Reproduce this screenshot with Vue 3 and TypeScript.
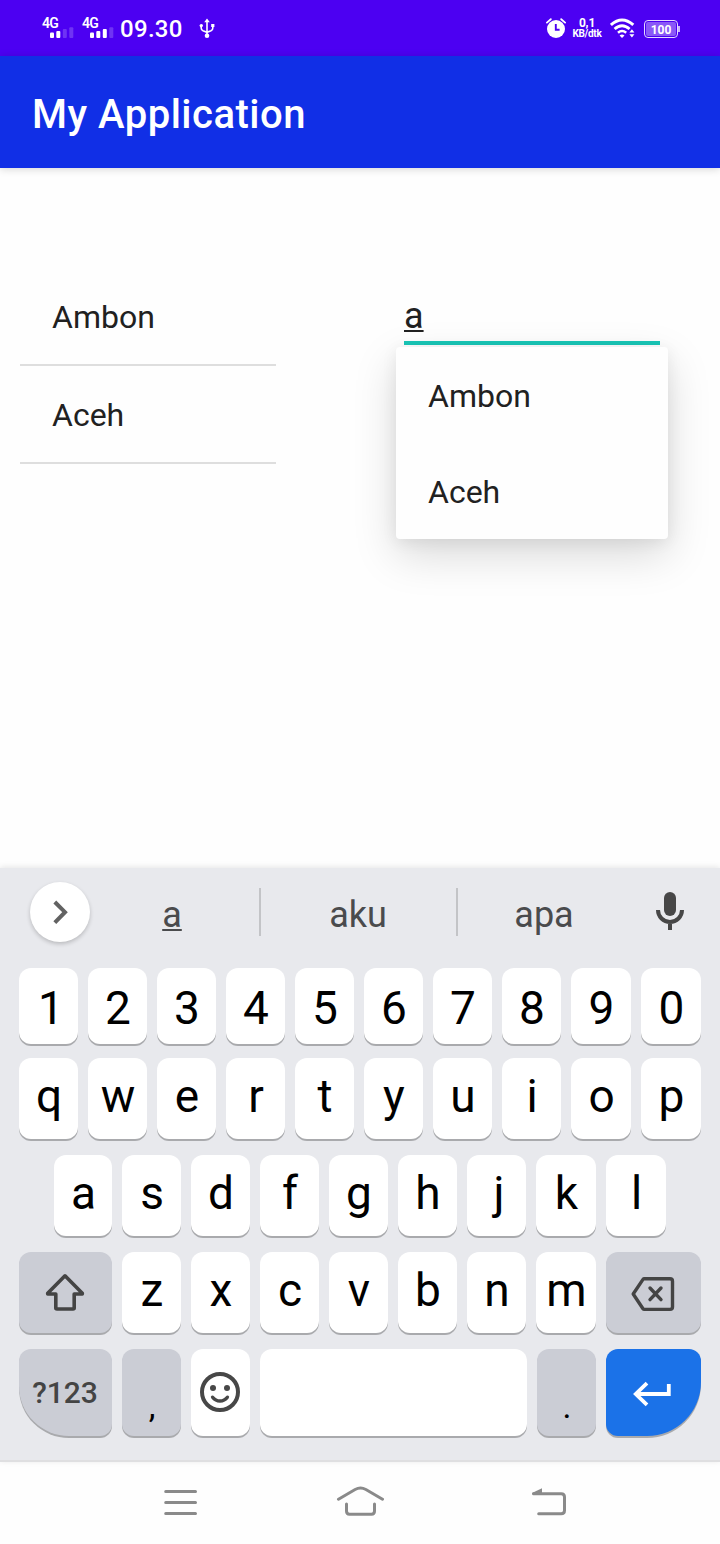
<script setup lang="ts">
import { ref } from 'vue'

interface Key {
  id: string
  kind?: 'fn' | 'enter' | 'space' | 'sym'
  icon?: 'shift' | 'delete' | 'emoji' | 'enter'
  label?: string
}

const letters = (text: string): Key[] => text.split('').map((c) => ({ id: c, label: c }))

const query = ref('a')
const cities = ['Ambon', 'Aceh']
const suggestions = ['a', 'aku', 'apa']
const signals = [2, 3]
const bars = [
  { x: 8, y: 5.4 },
  { x: 14.3, y: 4 },
  { x: 20.8, y: 2 },
  { x: 27.3, y: 0.3 },
]

const rows: { name: string; keys: Key[] }[] = [
  { name: 'digits', keys: letters('1234567890') },
  { name: 'top', keys: letters('qwertyuiop') },
  { name: 'home', keys: letters('asdfghjkl') },
  {
    name: 'lower',
    keys: [{ id: 'shift', kind: 'fn', icon: 'shift' }, ...letters('zxcvbnm'), { id: 'delete', kind: 'fn', icon: 'delete' }],
  },
  {
    name: 'bottom',
    keys: [
      { id: 'symbols', kind: 'fn', label: '?123' },
      { id: 'comma', kind: 'sym', label: ',' },
      { id: 'emoji', icon: 'emoji' },
      { id: 'space', kind: 'space' },
      { id: 'period', kind: 'sym', label: '.' },
      { id: 'enter', kind: 'enter', icon: 'enter' },
    ],
  },
]
</script>

<template>
  <div class="screen">
    <header class="status">
      <div v-for="(level, n) in signals" :key="n" class="signal">
        <span class="net">4G</span>
        <svg width="32" height="11" viewBox="0 0 32 11" fill="#fff">
          <rect
            v-for="(b, i) in bars"
            :key="i"
            :x="b.x"
            :y="b.y"
            width="4"
            :height="11 - b.y"
            rx="1"
            :opacity="i < level ? 1 : 0.2"
          />
        </svg>
      </div>
      <span class="clock">09.30</span>
      <svg class="usb" width="16" height="21" viewBox="0 0 16 21" fill="none" stroke="#fff" stroke-width="1.6">
        <path d="M8 3V17M2.2 8V10Q2.2 12 4 12.8L8 14.3L12 12.8Q13.8 12 13.8 10V8" />
        <path d="M8 .5L10.8 4.2H5.2Z" fill="#fff" stroke="none" />
        <circle cx="8" cy="17.8" r="2.3" fill="#fff" stroke="none" />
        <circle cx="2.3" cy="7.6" r="1.7" fill="#fff" stroke="none" />
        <path d="M12.2 6H15.4V9H12.2Z" fill="#fff" stroke="none" />
      </svg>
      <div class="status-right">
        <svg width="20" height="20" viewBox="0 0 20 20">
          <circle cx="10" cy="11" r="9" fill="#fff" />
          <path d="M.9 4.6L4.8 1.2M19.1 4.6L15.2 1.2" stroke="#fff" stroke-width="1.8" stroke-linecap="round" />
          <path d="M9.8 6V11.8H13.6" fill="none" stroke="#4c00f2" stroke-width="1.9" />
        </svg>
        <div class="speed"><span class="rate">0,1</span><span class="unit">KB/dtk</span></div>
        <svg class="wifi" width="26" height="21" viewBox="0 0 26 21" fill="none" stroke="#fff">
          <path d="M.9 6.9Q12 -3 23.3 6.9" stroke-width="3" />
          <path d="M4.6 11Q12 4.4 19.6 11" stroke-width="2.9" />
          <path d="M8 14.8Q12 11.2 16.2 14.8" stroke-width="2.5" />
          <path d="M9.6 17.4Q12 15.4 14.5 17.4L12 20Z" fill="#fff" stroke="none" />
          <path d="M19.4 14.4L21.9 11.2L24.4 14.4ZM19.4 16.2L21.9 19.4L24.4 16.2Z" fill="#fff" stroke="none" />
        </svg>
        <div class="battery"><span>100</span></div>
        <i class="tip"></i>
      </div>
    </header>

    <div class="appbar"><h1>My Application</h1></div>

    <main class="content">
      <ul class="list">
        <li v-for="c in cities" :key="c">{{ c }}</li>
      </ul>
      <div class="field">
        <div class="entry"><span>{{ query }}</span></div>
        <ul class="popup">
          <li v-for="c in cities" :key="c">{{ c }}</li>
        </ul>
      </div>
    </main>

    <section class="keyboard">
      <div class="strip">
        <button class="expand">
          <svg width="60" height="60" viewBox="0 0 60 60" fill="none" stroke="#626262" stroke-width="4">
            <path d="M24.8 20L35 30.2L24.8 40.6" />
          </svg>
        </button>
        <span v-for="(s, i) in suggestions" :key="s" class="suggestion" :class="{ typed: i === 0 }"><b>{{ s }}</b></span>
        <svg class="mic" width="28" height="38" viewBox="0 0 28 38">
          <rect x="8" y="0" width="12" height="24" rx="6" fill="#474747" />
          <path d="M2 18A12 12 0 0 0 26 18M14 30V38" fill="none" stroke="#474747" stroke-width="4" />
        </svg>
      </div>

      <div v-for="row in rows" :key="row.name" class="row" :class="row.name">
        <div v-for="k in row.keys" :key="k.id" class="key" :class="[k.kind, 'k-' + k.id]">
          <svg v-if="k.icon === 'shift'" width="40" height="38" viewBox="0 0 40 38" fill="none" stroke="#444" stroke-width="3.6" stroke-linejoin="round">
            <path d="M20 2.8L37.3 20.2V21H29.2V35Q29.2 36 28 36H12Q10.8 36 10.8 35V21H2.7V20.2Z" />
          </svg>
          <svg v-else-if="k.icon === 'delete'" width="44" height="36" viewBox="0 0 44 36" fill="none" stroke="#444" stroke-width="3.4" stroke-linecap="round" stroke-linejoin="round">
            <path d="M13.2 2.7H39Q41.5 2.7 41.5 5.2V31Q41.5 33.4 39 33.4H13.2Q12.5 33.4 12 32.7L2.2 18L12 3.4Q12.5 2.7 13.2 2.7ZM19 12L30 23.6M30 12L19 23.6" />
          </svg>
          <svg v-else-if="k.icon === 'emoji'" width="40" height="40" viewBox="0 0 40 40" fill="none" stroke="#474747">
            <circle cx="20" cy="20" r="18" stroke-width="4" />
            <circle cx="13" cy="16" r="3" fill="#474747" stroke="none" />
            <circle cx="27" cy="16" r="3" fill="#474747" stroke="none" />
            <path d="M12.6 25.2Q15.5 29 20 29T27.4 25.2" stroke-width="3.4" stroke-linecap="round" />
          </svg>
          <svg v-else-if="k.icon === 'enter'" width="40" height="26" viewBox="0 0 40 26" fill="none" stroke="#fff" stroke-width="3.8">
            <path d="M15 2.2L3.8 13L15 23.8M4 13H36.8V3" />
          </svg>
          <span v-else-if="k.label">{{ k.label }}</span>
        </div>
      </div>
    </section>

    <nav class="nav">
      <svg width="34" height="26" viewBox="0 0 34 26" stroke="#8a8a8a" stroke-width="3" stroke-linecap="round">
        <path d="M1.7 1.5H31.5M1.7 12.5H31.5M1.7 23.5H31.5" />
      </svg>
      <svg width="48" height="30" viewBox="0 0 48 30" fill="none" stroke="#8a8a8a" stroke-width="3" stroke-linecap="round">
        <path d="M2.5 13.3L19.1 3.5Q24.5 .7 29.9 3.5L46.5 13.3M10.5 18V25Q10.5 28.3 13.5 28.3H35.5Q38.5 28.3 38.5 25V18" />
      </svg>
      <svg width="36" height="28" viewBox="0 0 36 28" fill="none" stroke="#8a8a8a" stroke-width="3" stroke-linecap="round">
        <path d="M2.5 5.8H30.2Q33.5 5.8 33.5 9V22.5Q33.5 25.7 30.2 25.7H7.7" />
        <path d="M1 5L11 .2V6H1.6Z" fill="#8a8a8a" stroke="none" />
      </svg>
    </nav>
  </div>
</template>

<style>
body {
  background: #fefefe;
}
</style>

<style scoped>
.screen {
  width: 720px;
  height: 1544px;
  display: flex;
  flex-direction: column;
  overflow: hidden;
  background: #fefefe;
  font-family: Roboto, 'Liberation Sans', sans-serif;
  color: #212121;
}
svg {
  display: block;
  flex: none;
}
ul {
  list-style: none;
  margin: 0;
  padding: 0;
}
.status {
  flex: none;
  height: 56px;
  display: flex;
  align-items: flex-start;
  padding-left: 42px;
  box-sizing: border-box;
  background: #4c00f2;
  color: #fff;
}
.signal {
  width: 40px;
  padding-top: 18px;
}
.net {
  display: block;
  font-size: 14px;
  line-height: 10px;
  font-weight: 600;
  letter-spacing: -0.8px;
}
.signal svg {
  margin-top: -1px;
}
.clock {
  width: 77px;
  padding-top: 15px;
  margin-left: -2px;
  font-size: 24px;
  line-height: 28px;
  font-weight: 500;
  letter-spacing: 0.3px;
}
.usb {
  margin: 18px 0 0 2px;
}
.status-right {
  display: flex;
  margin: 18px 40px 0 auto;
}
.speed {
  width: 32px;
  margin-left: 5px;
  display: flex;
  flex-direction: column;
  align-items: center;
  font-weight: 700;
}
.rate {
  font-size: 12px;
  line-height: 11px;
  letter-spacing: -0.2px;
}
.unit {
  font-size: 10px;
  line-height: 9px;
  letter-spacing: -0.3px;
}
.wifi {
  margin-left: 7px;
}
.battery {
  box-sizing: border-box;
  width: 34px;
  height: 18px;
  margin: 2px 0 0 8px;
  padding: 1px;
  border: 1.5px solid #e4d8ff;
  border-radius: 4px;
  display: flex;
}
.battery span {
  flex: 1;
  border-radius: 2px;
  background: #8a58f7;
  font-size: 12px;
  line-height: 16px;
  font-weight: 700;
  text-align: center;
}
.tip {
  width: 2px;
  height: 6px;
  margin-top: 8px;
  background: #c9b3fc;
}
.appbar {
  flex: none;
  height: 112px;
  background: #112fe6;
  box-shadow: 0 1px 8px rgba(0, 0, 0, 0.17);
}
h1 {
  margin: 0;
  padding: 35px 0 0 32px;
  font-size: 40px;
  line-height: 47px;
  font-weight: 500;
  letter-spacing: 0.5px;
  color: #fff;
}
.content {
  flex: none;
  height: 700px;
  box-sizing: border-box;
  padding: 100px 60px 0 20px;
  display: flex;
  justify-content: space-between;
  align-items: flex-start;
}
.list,
.field {
  width: 256px;
}
li {
  height: 96px;
  padding-left: 32px;
  font-size: 32px;
  line-height: 98px;
}
.list li {
  border-bottom: 2px solid #dedede;
}
.field {
  position: relative;
}
.entry {
  height: 73px;
  border-bottom: 4px solid #1ac8b8;
  font-size: 36px;
  line-height: 96px;
}
.entry span {
  text-decoration: underline;
  text-decoration-thickness: 2px;
  text-underline-offset: 2px;
}
.popup {
  position: absolute;
  left: -8px;
  top: 79px;
  width: 272px;
  border-radius: 4px;
  background: #fefefe;
  box-shadow: 0 16px 44px rgba(0, 0, 0, 0.15), 0 3px 16px rgba(0, 0, 0, 0.07);
}
.keyboard {
  flex: none;
  height: 594px;
  box-sizing: border-box;
  padding: 0 19px;
  border-bottom: 2px solid #dfdfe1;
  background: #e8e9ed;
  box-shadow: 0 -1px 6px rgba(0, 0, 0, 0.1);
}
.strip {
  display: flex;
  height: 100px;
  padding-left: 11px;
}
.expand {
  width: 60px;
  height: 60px;
  margin: 14px 0 0;
  padding: 0;
  border: 0;
  border-radius: 50%;
  background: #fff;
  box-shadow: 0 2px 4px rgba(0, 0, 0, 0.2);
}
.suggestion {
  width: 197px;
  height: 48px;
  box-sizing: border-box;
  margin-top: 20px;
  padding-right: 1px;
  border-left: 2px solid #c3c4c7;
  font-size: 36px;
  line-height: 54px;
  text-align: center;
  color: #4a4b4d;
}
.suggestion.typed {
  width: 169px;
  border: 0;
  padding-right: 5px;
}
.suggestion:nth-of-type(3) {
  width: 175px;
}
.suggestion b {
  font-weight: 400;
}
.typed b {
  text-decoration: underline;
  text-decoration-thickness: 2px;
  text-underline-offset: 2px;
}
.mic {
  margin: 24px 0 0 25px;
}
.row {
  display: flex;
  gap: 10px;
  height: 81px;
  margin-bottom: 16px;
}
.key {
  flex: 0 0 59px;
  box-sizing: border-box;
  padding: 11px 0 0 1px;
  display: flex;
  justify-content: center;
  align-items: flex-start;
  border-radius: 12px;
  background: #fff;
  box-shadow: 0 2px 0 #a9aaad;
  font-size: 46px;
  line-height: 54px;
  color: #000;
}
.digits {
  height: 76px;
  margin-bottom: 14px;
}
.digits .key {
  padding-top: 13px;
}
.home {
  padding: 0 35px;
}
.bottom {
  height: 87px;
}
.k-9,
.k-0,
.k-o,
.k-p,
.k-k,
.k-l,
.k-m {
  flex-basis: 60px;
}
.k-a {
  flex-basis: 58px;
}
.key.k-1,
.key.k-j {
  padding-left: 5px;
}
.key.fn,
.key.sym {
  background: #cbcdd5;
}
.key.k-shift {
  flex: 0 0 93px;
  padding: 21px 2px 0 0;
}
.key.k-delete {
  flex: 0 0 95px;
  padding: 24px 2px 0 0;
}
.key.k-symbols {
  flex: 0 0 93px;
  padding: 26px 1px 0 0;
  border-bottom-left-radius: 50px;
  font-size: 30px;
  line-height: 36px;
  font-weight: 500;
  color: #444;
}
.key.sym {
  padding-top: 37px;
  font-size: 34px;
  line-height: 40px;
}
.key.k-emoji {
  padding: 23px 2px 0 0;
}
.key.space {
  flex: 1 1 0;
}
.key.enter {
  flex: 0 0 95px;
  padding: 32px 3px 0 0;
  border-bottom-right-radius: 54px;
  background: #1b72e8;
}
.nav {
  flex: 1;
  display: flex;
  align-items: flex-start;
  padding: 28px 0 0 164px;
}
.nav svg:nth-child(2) {
  margin: -4px 0 0 138px;
}
.nav svg:nth-child(3) {
  margin: -2px 0 0 147px;
}
</style>
